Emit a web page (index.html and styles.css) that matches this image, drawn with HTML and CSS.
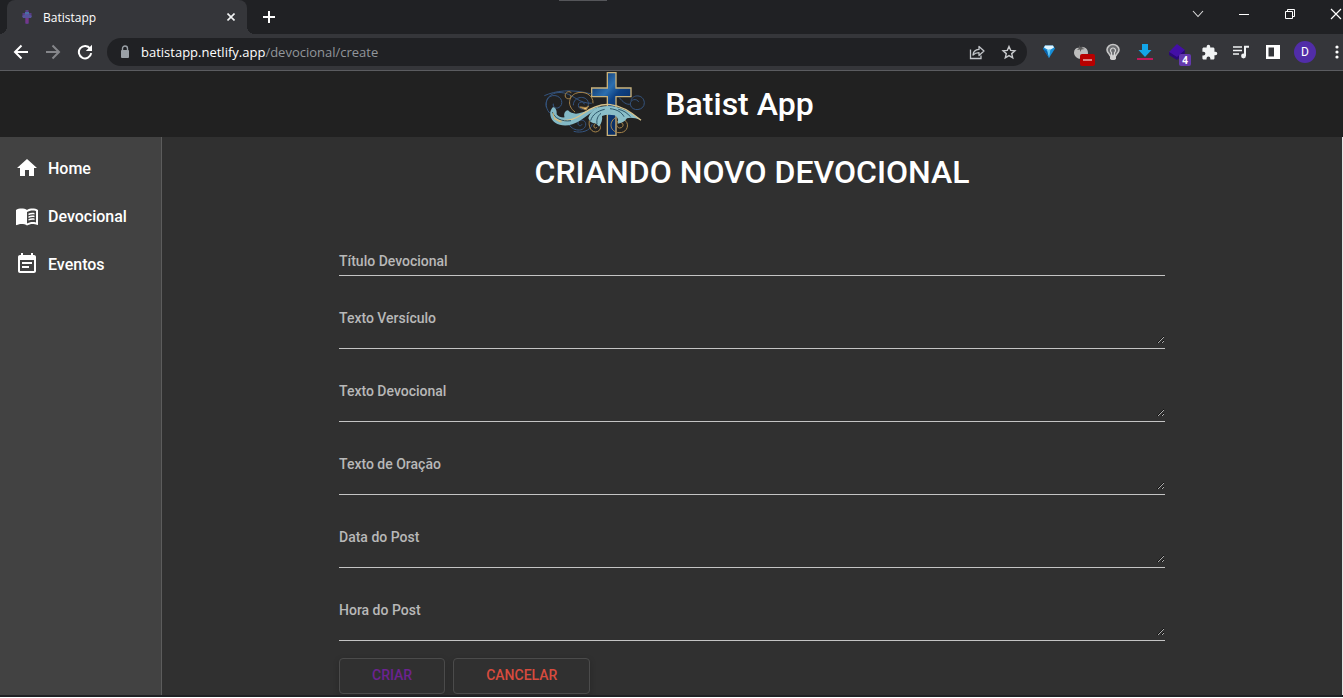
FILE: index.html
```html
<!DOCTYPE html>
<html lang="pt-BR">
<head>
<meta charset="utf-8">
<meta name="viewport" content="width=device-width, initial-scale=1">
<title>Batistapp</title>
<link rel="stylesheet" href="styles.css">
</head>
<body>
<div class="browser">
  <div class="tab-strip">
    <div class="tab">
      <svg class="tab-favicon" width="12" height="14" viewBox="0 0 12 14"><path d="M4.500 0h3v3h3v3h-3v8h-3V6h-3V3h3z" fill="#5a3c86"/><path d="M4 2h4v3H4z" fill="#4a6da6"/><path d="M1 6l4-2h2l4 2-1 2H2z" fill="#56549c"/><path d="M4.500 8h3v5h-3z" fill="#75368a"/></svg>
      <span class="tab-title">Batistapp</span>
      <button class="tab-close" aria-label="Fechar guia"><svg width="8" height="8" viewBox="0 0 8 8"><path d="M.5.5l7 7m0-7l-7 7" stroke="#f1f3f4" stroke-width="1.6"/></svg></button>
    </div>
    <button class="new-tab" aria-label="Nova guia"><svg width="12" height="12" viewBox="0 0 12 12"><path d="M6 0v12M0 6h12" stroke="#fff" stroke-width="2"/></svg></button>
    <span class="strip-handle"></span>
    <div class="window-buttons">
      <button aria-label="Pesquisar guias"><svg width="12" height="12" viewBox="0 0 12 12"><path d="M1 3l5 5.500 5-5.500" fill="none" stroke="#ddd" stroke-width="1.100"/></svg></button>
      <button aria-label="Minimizar"><svg width="12" height="12" viewBox="0 0 12 12"><path d="M1 6.500h10" stroke="#fff"/></svg></button>
      <button aria-label="Restaurar"><svg width="12" height="12" viewBox="0 0 12 12"><path d="M1.500 3.500h7v7h-7zM3.500 3.500v-2h7v7h-2" fill="none" stroke="#fff"/></svg></button>
      <button class="window-close" aria-label="Fechar"><svg width="14" height="12" viewBox="0 0 14 12"><path d="M2 1l10 10M12 1L2 11" stroke="#fff" stroke-width="1.200"/></svg></button>
    </div>
  </div>
  <div class="toolbar">
    <button class="tool" aria-label="Voltar"><svg width="16" height="16" viewBox="0 0 16 16"><path d="M15 8H2m6.500-6.500L2 8l6.500 6.500" fill="none" stroke="#fff" stroke-width="2"/></svg></button>
    <button class="tool" aria-label="Avançar"><svg width="16" height="16" viewBox="0 0 16 16"><path d="M1 8h13M7.500 1.500L14 8l-6.500 6.500" fill="none" stroke="#85868a" stroke-width="2"/></svg></button>
    <button class="tool" aria-label="Recarregar"><svg width="16" height="16" viewBox="0 0 16 16"><path d="M13.200 4.700A6.200 6.200 0 1 0 14.200 9.200" fill="none" stroke="#fff" stroke-width="2"/><path d="M15 .8V7H8.800z" fill="#fff"/></svg></button>
    <div class="omnibox">
      <svg class="lock" width="10" height="14" viewBox="0 0 10 14"><path d="M2.500 6V3.500a2.500 2.500 0 0 1 5 0V6" fill="none" stroke="#9aa0a6" stroke-width="1.400"/><rect x="1" y="5" width="8" height="8" rx="1" fill="#9aa0a6"/></svg>
      <span class="url"><b>batistapp.netlify.app</b>/devocional/create</span>
      <button class="tool" aria-label="Compartilhar"><svg width="16" height="16" viewBox="0 0 16 16"><path d="M1.500 5.500v9h10.500v-3" fill="none" stroke="#c3c6ca" stroke-width="1.300"/><path d="M4 11c.3-3.500 2.500-5.400 6-5.600V2.500L15 7l-5 4.500V8.600C7.500 8.600 5.600 9.300 4 11z" fill="none" stroke="#c3c6ca" stroke-width="1.300" stroke-linejoin="round"/></svg></button>
      <button class="tool" aria-label="Favoritar"><svg width="16" height="16" viewBox="0 0 16 16"><path d="M8 2.500l1.700 3.900 4.200.4-3.200 2.800 1 4.200L8 11.600l-3.700 2.200 1-4.200-3.200-2.800 4.200-.4z" fill="none" stroke="#c8cacd" stroke-width="1.400"/></svg></button>
    </div>
    <button class="tool" aria-label="Extensão diamante"><svg width="16" height="16" viewBox="0 0 16 16"><path d="M2 4.500L4 1.500h8l2 3L8 14z" fill="#168ed7"/><path d="M4 1.500h8l1 2-5 3-5-3z" fill="#e2f6ff"/><path d="M6 6l2 8 1.500-9z" fill="#69c9f5"/><path d="M2 4.500l6 9.500-2-7z" fill="#0860aa"/></svg></button>
    <button class="tool" aria-label="Extensão pomodoro"><svg width="16" height="16" viewBox="0 0 16 16"><path d="M7 4c5-2 8 1 8 5 0 3-3 6-7 6s-7-3-7-6.500C1 5 4 3 7 4z" fill="#bdbdbd"/><path d="M6.500 1l1 2.500 2-1.500-.5 2 3 1-3.500.5L7 8V5.500L4 6l2-2z" fill="#5b5b5b"/></svg><span class="badge badge-red"><svg width="9" height="2" viewBox="0 0 9 2"><path d="M0 1h9" stroke="#fff"/></svg></span></button>
    <button class="tool" aria-label="Extensão lâmpada"><svg width="16" height="18" viewBox="0 0 16 18"><path d="M5 12.500C4.500 10.500 2 10 2 6.800a6 5.300 0 0 1 12 0c0 3.200-2.500 3.700-3 5.700z" fill="#6a6c6f" stroke="#c6c6c6" stroke-width="1.600"/><path d="M6.500 13V9.500a2.500 2.500 0 1 1 3 0V13" fill="none" stroke="#d6d6d6" stroke-width="1.200"/><path d="M5 13h6v3l-1.500 1h-3L5 16z" fill="#d0d0d0"/></svg></button>
    <button class="tool" aria-label="Downloads"><svg width="16" height="18" viewBox="0 0 16 18"><path d="M5 1h6v6h3.500L8 14 1.500 7H5z" fill="#12a5e8"/><path d="M0 16h16" stroke="#c2185b" stroke-width="2"/></svg></button>
    <button class="tool" aria-label="Extensão livro, 4 itens"><svg width="16" height="16" viewBox="0 0 16 16"><path d="M0 8l8-8 8 6-8 8z" fill="#430fa6"/><path d="M0 8v3l8 5 8-7V6l-8 7z" fill="#2b0878"/></svg><span class="badge badge-purple">4</span></button>
    <button class="tool" aria-label="Extensões"><svg width="17" height="17" viewBox="0 0 24 24"><path d="M20.500 11H19V7c0-1.100-.9-2-2-2h-4V3.500a2.500 2.500 0 0 0-5 0V5H4c-1.100 0-2 .9-2 2v3.800h1.500a2.700 2.700 0 0 1 0 5.400H2V20c0 1.100.9 2 2 2h3.800v-1.500a2.700 2.700 0 0 1 5.400 0V22H17c1.100 0 2-.9 2-2v-4h1.500a2.500 2.500 0 0 0 0-5z" fill="#f1f3f4"/></svg></button>
    <button class="tool" aria-label="Controle de mídia"><svg width="16" height="14" viewBox="0 0 16 14"><path d="M0 2h9M0 5.500h9M0 9h6" stroke="#f1f3f4" stroke-width="1.700"/><path d="M12 11V1.800h4" fill="none" stroke="#f1f3f4" stroke-width="2"/><circle cx="10.500" cy="11" r="2.400" fill="#f1f3f4"/></svg></button>
    <button class="tool" aria-label="Painel lateral"><svg width="14" height="14" viewBox="0 0 14 14"><path d="M0 0h14v14H0zM2.500 2.500v9H8v-9z" fill="#fff" fill-rule="evenodd"/></svg></button>
    <button class="tool" aria-label="Perfil"><span class="avatar">D</span></button>
    <button class="tool tool-menu" aria-label="Menu"><svg width="14" height="16" viewBox="0 0 14 16"><g fill="#fff"><circle cx="8" cy="3" r="1.600"/><circle cx="8" cy="8" r="1.600"/><circle cx="8" cy="13" r="1.600"/></g></svg></button>
  </div>
</div>

<header class="app-header">
  <svg class="logo" viewBox="-30 9 360 198" role="img" aria-label="Cruz com ornamentos">
    <defs>
      <linearGradient id="cross" gradientUnits="userSpaceOnUse" x1="170" y1="20" x2="275" y2="110"><stop offset="0" stop-color="#0b2c60"/><stop offset=".42" stop-color="#2c6fb0"/><stop offset=".62" stop-color="#0f4284"/><stop offset="1" stop-color="#0a2f66"/></linearGradient>
    </defs>
    <path d="M205 14h26v46h45v26h-45v116h-26V86h-47V60h47z" fill="url(#cross)" stroke="#c9b27c" stroke-width="4"/>
    <g fill="none" stroke="#34547f" stroke-width="3">
      <path d="M16 83C50 68 95 62 158 78M22 118c-6-30 20-52 58-42 26 7 40 30 78 30"/>
      <path d="M32 135C16 118 18 88 40 83c22-4 36 18 24 32-10 11-24 3-21-8"/>
      <path d="M240 88c12 14 22 24 36 20M276 98c4-20 38-20 40 6 1 25-38 28-42 6-2-17 20-20 25-8"/>
      <path d="M88 160c2 28 46 36 52 12 3-17-20-21-23-8-1 10 9 12 12 5M104 190c22 6 50 0 56-22"/>
      <path d="M103 112c0-28 40-32 45-8 3 22-28 26-30 9-1-13 16-15 18-4"/>
    </g>
    <g fill="none" stroke="#a8854a" stroke-width="3">
      <path d="M97 74c-10-9-23 4-17 14 6 9 20 2 14-6"/>
      <path d="M108 132c-24-18-20-46 2-56 26-10 54 6 52 30"/>
      <path d="M151 158c-5 28 16 42 30 29 11-14-7-28-15-17-5 9 5 14 8 7"/>
      <path d="M228 150c-20 14-14 42 12 44 30 2 34-37 9-40-18-2-22 24-7 26 12 0 14-15 4-16"/>
      <path d="M122 117c10-1 18 5 27-3l-8 12z" fill="#efc67c"/>
    </g>
    <path d="M42 117c10 2 12 14 11 22 6 8 16 10 24 9-4-8 0-20 10-21 8 8 19 12 33 9 22-5 42-18 66-22-28 14-50 42-86 55-30 10-63-2-66-28-2-9 2-17 8-24z" fill="#83b9c6"/>
    <path d="M148 150c6-22 28-36 58-36 40 0 72 20 100 42-20-7-32-8-42-5-7 10-16 15-28 16 3-14-1-20-9-25-15-3-27-2-38 2 2 10-1 22-9 32-6-8-10-12-16-10-8-2-14-8-16-16z" fill="#8bbfc9"/>
    <g fill="none">
      <path d="M46 152c24 12 58 5 84-14 28-20 52-31 84-28 36 3 65 24 92 47" stroke="#d8c38c" stroke-width="4"/>
      <path d="M40 132c6 18 28 30 56 26M155 158c5-18 20-29 42-34M174 168c-2-14 2-24 12-32M213 122c22 2 36 12 42 24M238 124c15 3 27 11 36 22" stroke="#2a5468" stroke-width="3"/>
      <path d="M42 134c2 18 12 26 26 28" stroke="#d8b96f" stroke-width="3"/>
    </g>
  </svg>
  <span class="app-name">Batist App</span>
</header>

<div class="app-body">
  <nav class="sidebar">
    <a class="nav-link" href="#home"><svg width="24" height="24" viewBox="0 0 24 24"><path d="M10 20v-6h4v6h5v-8h3L12 3 2 12h3v8z"/></svg>Home</a>
    <a class="nav-link" href="#devocional"><svg width="24" height="24" viewBox="0 0 24 24"><path d="M17.500 4.500c-1.950 0-4.050.4-5.500 1.500-1.450-1.100-3.550-1.500-5.500-1.500S2.450 4.900 1 6v14.650c0 .25.25.5.5.5.1 0 .15-.05.25-.05C3.100 20.450 5.050 20 6.500 20c1.950 0 4.050.4 5.500 1.500 1.350-.85 3.800-1.500 5.500-1.500 1.650 0 3.350.3 4.750 1.050.1.050.15.050.25.050.25 0 .5-.25.5-.5V6c-1.500-1.100-3.550-1.500-5.500-1.500zM21 18.500c-1.100-.35-2.300-.5-3.500-.5-1.700 0-4.150.65-5.500 1.500V8c1.350-.85 3.800-1.500 5.500-1.500 1.200 0 2.400.15 3.500.5z"/><path d="M13.500 9.600c2-.9 4-1.100 6-.6v1.500c-2-.4-4-.2-6 .7zM13.500 12.300c2-.9 4-1.100 6-.6v1.500c-2-.4-4-.2-6 .7zM13.500 15c2-.9 4-1.100 6-.6v1.500c-2-.4-4-.2-6 .7z"/></svg>Devocional</a>
    <a class="nav-link" href="#eventos"><svg width="24" height="24" viewBox="0 0 24 24"><path d="M17 10H7v2h10v-2zm2-7h-1V1h-2v2H8V1H6v2H5c-1.110 0-1.990.9-1.990 2L3 19c0 1.100.89 2 2 2h14c1.100 0 2-.9 2-2V5c0-1.100-.9-2-2-2zm0 16H5V8h14v11zm-5-5H7v2h7v-2z"/></svg>Eventos</a>
  </nav>
  <main class="content">
    <h1 class="page-title">CRIANDO NOVO DEVOCIONAL</h1>
    <form class="form">
      <div class="field"><label for="titulo">Título Devocional</label><input id="titulo" type="text"></div>
      <div class="field"><label for="versiculo">Texto Versículo</label><textarea id="versiculo"></textarea></div>
      <div class="field"><label for="texto">Texto Devocional</label><textarea id="texto"></textarea></div>
      <div class="field"><label for="oracao">Texto de Oração</label><textarea id="oracao"></textarea></div>
      <div class="field"><label for="data">Data do Post</label><textarea id="data"></textarea></div>
      <div class="field"><label for="hora">Hora do Post</label><textarea id="hora"></textarea></div>
      <div class="actions">
        <button class="action action-create" type="submit">CRIAR</button>
        <button class="action action-cancel" type="button">CANCELAR</button>
      </div>
    </form>
  </main>
</div>
<div class="window-edge"></div>
</body>
</html>
```

FILE: styles.css
```css
* { box-sizing: border-box; }

body {
  margin: 0;
  min-height: 100vh;
  display: flex;
  flex-direction: column;
  background: #303030;
  color: #fff;
  font-family: Roboto, sans-serif;
  overflow-x: hidden;
}

button {
  padding: 0;
  border: 0;
  background: none;
  color: inherit;
  font: inherit;
}

svg { display: block; flex: none; }

/* Browser frame */
.browser {
  font-family: "Open Sans", sans-serif;
  background: #35363a;
  border-bottom: 1px solid #5b5c60;
}

.tab-strip {
  position: relative;
  display: flex;
  height: 34px;
  padding-left: 7px;
  background: #202124;
}

.tab {
  position: relative;
  display: flex;
  align-items: center;
  width: 240px;
  padding: 0 12px 0 14px;
  border-radius: 8px 8px 0 0;
  background: #35363a;
  font-size: 12px;
}

.tab::before,
.tab::after {
  content: "";
  position: absolute;
  bottom: 0;
  width: 8px;
  height: 8px;
}

.tab::before {
  right: 100%;
  background: radial-gradient(circle at 0 0, #202124 8px, #35363a 8px);
}

.tab::after {
  left: 100%;
  background: radial-gradient(circle at 100% 0, #202124 8px, #35363a 8px);
}

.tab-title { flex: 1; margin-left: 10px; }

.new-tab { padding: 0 16px; }

.strip-handle {
  position: absolute;
  top: 0;
  left: 559px;
  width: 48px;
  height: 1px;
  background: #55565a;
}

.window-buttons { display: flex; height: 28px; margin-left: auto; }

.window-buttons button {
  display: flex;
  align-items: center;
  justify-content: center;
  width: 46px;
}

.window-buttons .window-close { width: 30px; justify-content: flex-end; }

.toolbar {
  display: flex;
  align-items: center;
  height: 36px;
  padding-left: 5px;
}

.tool {
  position: relative;
  display: flex;
  flex: none;
  align-items: center;
  justify-content: center;
  width: 32px;
  height: 28px;
}

.tool-menu { width: 22px; justify-content: flex-end; }

.omnibox {
  display: flex;
  flex: 1;
  align-items: center;
  height: 28px;
  margin: 0 6px;
  padding: 0 2px 0 13px;
  border-radius: 14px;
  background: #202124;
}

.url {
  flex: 1;
  margin-left: 11px;
  color: #92969b;
  font-size: 13px;
}

.url b { color: #fff; font-weight: 400; }

.badge {
  position: absolute;
  right: 4px;
  bottom: 0;
  display: flex;
  align-items: center;
  justify-content: center;
  width: 12px;
  height: 12px;
  border-radius: 2px;
  font-size: 10px;
  font-weight: 700;
}

.badge-red { right: 2px; width: 15px; background: #b80000; }
.badge-purple { right: 2px; background: #6339ad; }

.avatar {
  display: flex;
  align-items: center;
  justify-content: center;
  width: 22px;
  height: 22px;
  border-radius: 50%;
  background: #512da8;
  font-family: Roboto, sans-serif;
  font-size: 12px;
}

/* Application */
.app-header {
  display: flex;
  align-items: center;
  justify-content: center;
  gap: 16px;
  height: 66px;
  background: #212121;
}

.logo { width: 120px; height: 66px; }

.app-name { font-size: 32px; font-weight: 500; }

.app-body {
  display: flex;
  flex: 1;
  border-right: 1px solid #e4e4e4;
}

.sidebar {
  width: 162px;
  padding-top: 7px;
  border-right: 1px solid #5c5c5c;
  background: #424242;
}

.nav-link {
  display: flex;
  align-items: center;
  gap: 9px;
  height: 48px;
  padding-left: 15px;
  color: #fff;
  font-size: 16px;
  font-weight: 500;
  text-decoration: none;
}

.nav-link svg { fill: #fff; }

.content {
  flex: 1;
  padding: 15px 0 1px;
}

.page-title {
  margin: 0 0 58px;
  font-size: 32px;
  font-weight: 500;
  line-height: 40px;
  text-align: center;
}

.form {
  display: flex;
  flex-direction: column;
  gap: 31px;
  width: 70%;
  margin: 0 auto;
}

.field {
  display: grid;
  padding-bottom: 4px;
  border-bottom: 1px solid #c4c4c4;
}

.field label,
.field input,
.field textarea { grid-area: 1 / 1; }

.field label {
  z-index: 1;
  color: #b8b8b8;
  font-size: 14px;
  font-weight: 500;
  line-height: 22px;
  pointer-events: none;
}

.field input,
.field textarea {
  width: 100%;
  height: 37px;
  padding: 0;
  border: 0;
  outline: 0;
  background: transparent;
  color: #fff;
  font: 14px/22px Roboto, sans-serif;
  resize: vertical;
}

.field input { height: 21px; }
.field:first-child label { height: 21px; }

.actions {
  display: flex;
  gap: 8px;
  margin-top: -14px;
}

.action {
  height: 36px;
  padding: 0 32px 2px;
  border: 1px solid #4b4b4b;
  border-radius: 4px;
  box-shadow: 0 2px 6px rgba(0, 0, 0, .2);
  font-size: 14px;
  font-weight: 500;
}

.action-create { color: #6c2390; }
.action-cancel { color: #d84b3e; }

.window-edge {
  height: 3px;
  border-bottom: 1px solid #fff;
  background: #202124;
}
```
